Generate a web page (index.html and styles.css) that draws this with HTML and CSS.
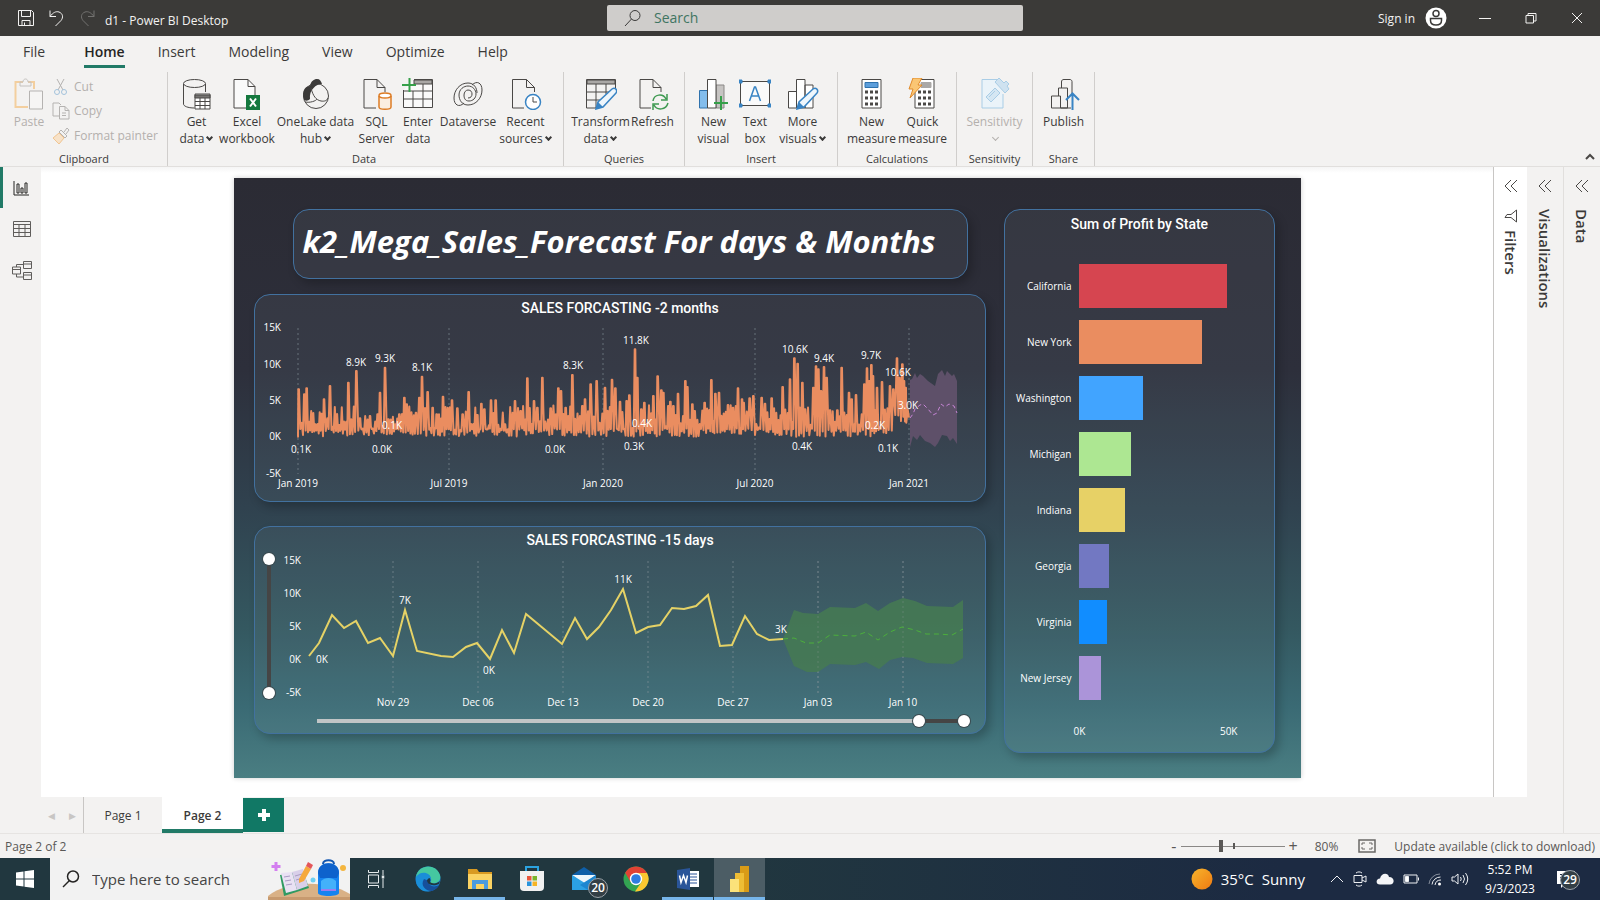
FILE: index.html
```html
<!DOCTYPE html>
<html lang="en">
<head>
<meta charset="utf-8">
<title>d1 - Power BI Desktop</title>
<link rel="stylesheet" href="styles.css">
</head>
<body>
<div class="app">
<header class="titlebar">
  <div class="quick">
    <button aria-label="Save"><svg width="18" height="18" viewBox="0 0 18 18"><path d="M1.5 1.500h13l2 2v13h-15zM4.500 1.500v6h9v-6M5 16.500v-5h8v5M7.500 16.500v-3"/></svg></button>
    <button aria-label="Undo"><svg width="18" height="18" viewBox="0 0 18 18"><path d="M2 1.500v6h6M2 7.500C5 3.500 8 2 11 3c4 1.500 4.500 5.500 2 8.500l-5.500 5.500"/></svg></button>
    <button aria-label="Redo" class="dim"><svg width="18" height="18" viewBox="0 0 18 18"><path d="M15 1.500v6H9M15 7.500C12 3.500 9 2 6 3 2 4.500 1.500 8.500 4 11.500L9.500 17"/></svg></button>
    <span class="doc">d1 - Power BI Desktop</span>
  </div>
  <label class="search"><svg width="18" height="18" viewBox="0 0 18 18"><circle cx="11" cy="6.500" r="5"/><path d="M7.500 10 1 17"/></svg><input type="text" placeholder="Search" aria-label="Search"></label>
  <div class="window-tools">
    <button class="signin">Sign in <svg width="22" height="22" viewBox="0 0 22 22"><circle cx="11" cy="11" r="10.500" fill="#fff" stroke="none"/><circle cx="11" cy="6.500" r="3" stroke="#3b3a38" stroke-width="1.500"/><path d="M5.500 11.500h11v2c0 3-2.500 4.500-5.500 4.500s-5.500-1.500-5.500-4.500z" stroke="#3b3a38" stroke-width="1.500"/></svg></button>
    <button class="win" aria-label="Minimize"><svg width="12" height="12" viewBox="0 0 12 12"><path d="M0 6.500h12"/></svg></button>
    <button class="win" aria-label="Restore"><svg width="12" height="12" viewBox="0 0 12 12"><path d="M1 3.500h7.500V11H1zM3 3.500v-2h8v7.500H8.500"/></svg></button>
    <button class="win" aria-label="Close"><svg width="12" height="12" viewBox="0 0 12 12"><path d="m1 1 10 10M11 1 1 11"/></svg></button>
  </div>
</header>

<nav class="tabs">
  <button class="file">File</button><button class="on">Home</button><button>Insert</button><button>Modeling</button><button>View</button><button>Optimize</button><button>Help</button>
</nav>

<section class="ribbon">
  <div class="group clipboard">
    <div class="clip">
      <button class="tool off" disabled><svg width="32" height="32" viewBox="0 0 32 32"><path d="M10 4H2.500v25H15M21 11V4h-6" stroke="#f3cf9f" stroke-width="2"/><path d="M7 8V4h3c0-4 5-4 5 0h3v4z" stroke="#c4c2c0"/><path d="M16.500 13h13v18h-13z" stroke="#b5b3b1" fill="#f6f5f4"/></svg><span>Paste</span></button>
      <div class="clip-list">
        <button disabled><svg width="18" height="18" viewBox="0 0 18 18"><path d="M5 1l6 11M12 1 6 12" stroke="#b5b3b1"/><circle cx="5" cy="14" r="2.500" stroke="#a4c3dc"/><circle cx="12" cy="14" r="2.500" stroke="#a4c3dc"/></svg>Cut</button>
        <button disabled><svg width="18" height="18" viewBox="0 0 18 18"><path d="M7 14H1V1h6l2 2M7.500 4.500H13l4 4V17H7.500zM13 4.500v4h4M10 11h4M10 13.500h4" stroke="#b5b3b1"/></svg>Copy</button>
        <button disabled><svg width="18" height="18" viewBox="0 0 18 18"><path d="m7 6 5 5-5 6-6-6z" fill="#f7e2c8" stroke="#f0c592"/><path d="m7 5 2-2 6 6-2 2zM12 5l3-4 2 2-3 4" stroke="#b5b3b1"/></svg>Format painter</button>
      </div>
    </div>
    <div class="caption">Clipboard</div>
  </div>

  <div class="group data">
    <div class="tools">
      <button class="tool"><svg width="32" height="32" viewBox="0 0 32 32"><path d="M2.500 6v20c0 2 4 4 11 4M24.500 14V6"/><ellipse cx="13.500" cy="5.500" rx="11" ry="4"/><path d="M14 16h15v15H14z" fill="#fff"/><path d="M14 17h15v3H14z" fill="#767472"/><path d="M14 23.500h15M14 27.500h15M19 20v11M24 20v11"/></svg><span>Get<br>data<i class="chev"></i></span></button>
      <button class="tool"><svg width="32" height="32" viewBox="0 0 32 32"><path d="M3 1.500h14l7 7V30H3z" fill="#fafafa"/><path d="M17 1.500v7h7"/><path d="M15 17h14v15H15z" fill="#15793f" stroke="none"/><path d="m19 20.500 6 8M25 20.500l-6 8" stroke="#fff" stroke-width="2"/></svg><span>Excel<br>workbook</span></button>
      <button class="tool"><svg width="32" height="32" viewBox="0 0 32 32"><circle cx="16" cy="18" r="12.500"/><path d="M4 22C1 12 6 8 10 8c1-5 4-7 7-7s4 2 5 5c-6 0-13 6-12 15-2 2-4 2-6 1z" fill="#3b3a39" stroke="none"/><path d="M11 10c2 8 5 12 10 13 3 .5 6 0 7-3M5 24c5 1 11-1 12-3"/></svg><span>OneLake data<br>hub<i class="chev"></i></span></button>
      <button class="tool"><svg width="32" height="32" viewBox="0 0 32 32"><path d="M15 30H3V1.500h13l8 8V14M16 1.500v8h8"/><path d="M18 18v11c0 3 12 3 12 0V18" fill="#fbeee1" stroke="#dd7c25" stroke-width="1.500"/><ellipse cx="24" cy="17.500" rx="6" ry="2.500" fill="#fff" stroke="#dd7c25" stroke-width="1.500"/></svg><span>SQL<br>Server</span></button>
      <button class="tool"><svg width="32" height="32" viewBox="0 0 32 32"><path d="M12 1.500h18.500v28h-29V12" fill="#fafafa"/><path d="M12 2h18v4H12z" fill="#aaa8a6"/><path d="M1.500 13h29M1.500 21h29M11 13v16M21 6v23"/><path d="M7.500 0v14M0 7h14" stroke="#36a04a" stroke-width="2"/></svg><span>Enter<br>data</span></button>
      <button class="tool"><svg width="32" height="32" viewBox="0 0 32 32"><path d="M20 7c5-5 10-2 10 5 0 8-6 15-14 15-6 0-9-5-9-10 0-6 5-9 9-9 5 0 8 4 8 8s-3 7-7 7-5-3-5-6 2-5 4-5"/><path d="M12 25C7 30 2 27 2 20 2 12 8 5 16 5c6 0 9 5 9 10M16 12c3 0 4 2 4 4s-1 4-4 4"/></svg><span>Dataverse</span></button>
      <button class="tool"><svg width="32" height="32" viewBox="0 0 32 32"><path d="M14 30H2.500V1.500h14l8 8V14M16.500 1.500v8h8"/><circle cx="23" cy="24" r="7.500" fill="#fff" stroke="#3984c4" stroke-width="1.500"/><path d="M23 19v5h4"/></svg><span>Recent<br>sources<i class="chev"></i></span></button>
    </div>
    <div class="caption">Data</div>
  </div>

  <div class="group queries">
    <div class="tools">
      <button class="tool"><svg width="32" height="32" viewBox="0 0 32 32"><path d="M1.500 1.500h29V13M13 30H1.500V1.500" fill="none"/><path d="M2 2h28v4H2z" fill="#aaa8a6"/><path d="M1.500 14h24M1.500 22h14M11 6v24M21 6v10"/><path d="m11 31 2-7 14-13c3-2 6 1 4 4L18 29z" fill="#eef6fc" stroke="#3984c4" stroke-width="1.500"/><path d="m11 31 2-7 5 5z" fill="#3984c4" stroke="none"/></svg><span>Transform<br>data<i class="chev"></i></span></button>
      <button class="tool"><svg width="32" height="32" viewBox="0 0 32 32"><path d="M14 30H3V1.500h13l8 8V14M16 1.500v8h8" fill="none"/><path d="M16 23c1-7 10-8 13-2M31 25c-2 7-11 8-14 2M30 16v6h-6M16 32v-6h6" stroke="#3f9a52" stroke-width="1.500"/></svg><span>Refresh</span></button>
    </div>
    <div class="caption">Queries</div>
  </div>

  <div class="group insert">
    <div class="tools">
      <button class="tool"><svg width="32" height="32" viewBox="0 0 32 32"><path d="M1.500 12.500h8V30h-8z" fill="#83bdec" stroke="#2f72ad"/><path d="M18 7h8v23h-8z" fill="#c6c4c2" stroke="#8a8886"/><path d="M9.500 1.500H18V30H9.500z" fill="#fff"/><path d="M23 18v14M16 25h14" stroke="#36a04a" stroke-width="2"/></svg><span>New<br>visual</span></button>
      <button class="tool"><svg width="32" height="32" viewBox="0 0 32 32"><path d="M1.500 3.500h29v24h-29z" fill="#fafafa"/><path d="M0 2h3v3H0zM29 2h3v3h-3zM0 26h3v3H0zM29 26h3v3h-3z" fill="#3984c4" stroke="#3984c4"/><path d="m10.500 23 5-14h1l5 14M12.500 18h7" stroke="#3984c4" stroke-width="1.500"/></svg><span>Text<br>box</span></button>
      <button class="tool"><svg width="32" height="32" viewBox="0 0 32 32"><path d="M1.500 13.500h8V30h-8zM9.500 1.500H18V30H9.500zM18 7h8v23h-8z" fill="#fff"/><path d="m10 31 2-7 14-13c3-2 6 1 4 4L17 29z" fill="#eef6fc" stroke="#3984c4" stroke-width="1.500"/><path d="m10 31 2-7 5 5z" fill="#3984c4" stroke="none"/></svg><span>More<br>visuals<i class="chev"></i></span></button>
    </div>
    <div class="caption">Insert</div>
  </div>

  <div class="group calc">
    <div class="tools">
      <button class="tool"><svg width="32" height="32" viewBox="0 0 32 32"><path d="M6 1.500h19V30H6z" fill="#fff"/><path d="M9 4.500h13v5H9z" fill="#5c9edb" stroke="#2f72ad"/><path d="M9 14h13M9 20h13M9 26h13" stroke-width="3" stroke-dasharray="3 2"/></svg><span>New<br>measure</span></button>
      <button class="tool"><svg width="32" height="32" viewBox="0 0 32 32"><path d="M8 1.500h19V30H8z" fill="#fff"/><path d="M14 4.500h10v5H14z" fill="#aaa8a6" stroke="#aaa8a6"/><path d="M11 14h13M11 20h13M11 26h13" stroke-width="3" stroke-dasharray="3 2"/><path d="M6 0h9l-4 7h4L3 20l3-9H2z" fill="#fac674" stroke="#e08a2a"/></svg><span>Quick<br>measure</span></button>
    </div>
    <div class="caption">Calculations</div>
  </div>

  <div class="group sens">
    <div class="tools">
      <button class="tool off" disabled><svg width="32" height="32" viewBox="0 0 32 32"><g stroke="#a9cde6"><path d="M19 1.500H4V30h21V16" fill="#eaf3f9"/><path d="m8 19 9-9 5 5-9 9zM11 19l6-6" fill="#d5e7f3"/><path d="m17 4 4-4 5 5 2-2 3 3-2 2 2 3-4 4z" fill="#cfe2f0"/></g></svg><span>Sensitivity<br><i class="chev"></i></span></button>
    </div>
    <div class="caption">Sensitivity</div>
  </div>

  <div class="group share">
    <div class="tools">
      <button class="tool"><svg width="32" height="32" viewBox="0 0 32 32"><path d="M3.500 18h9v12h-9zM12.500 30h7v-20h-9v8M13.500 10V4c0-2 1-2.500 2.500-2.500h6c1 0 2 1 2 2V16M12.500 30H23" fill="none"/><path d="M24.500 32V16M18 22l6.500-6.500L31 22" stroke="#3984c4" stroke-width="2"/></svg><span>Publish</span></button>
    </div>
    <div class="caption">Share</div>
  </div>
  <button class="collapse" aria-label="Collapse ribbon"><svg width="10" height="8" viewBox="0 0 10 8"><path d="m1 6 4-4 4 4" stroke-width="2"/></svg></button>
</section>

<div class="workspace">
  <div class="editor">
    <div class="upper">
      <aside class="rail">
        <button class="on" aria-label="Report view"><svg width="20" height="20" viewBox="0 0 20 20"><path d="M2 3v14h15M5 6h2v9H5zM9 10h2v5H9zM13 5h2v10h-2z" stroke="#252423"/></svg></button>
        <button aria-label="Table view"><svg width="20" height="20" viewBox="0 0 20 20"><path d="M1.500 2.500h17v15h-17zM1.500 5.500h17M1.500 9.500h17M1.500 13.500h17M7 5v12M13 5v12"/></svg></button>
        <button aria-label="Model view"><svg width="20" height="20" viewBox="0 0 20 20"><path d="M.5 7h8v7h-8zM.5 9.500h8M11.500 1.500h8v7h-8zM11.500 4h8M11.500 12.500h8v7h-8zM11.500 15h8M4.500 7V4.500h7M4.500 14v3h7"/></svg></button>
      </aside>
      <main class="stage">
        <div class="canvas">
          <div class="left">
            <h1 class="card headline">k2_Mega_Sales_Forecast For days &amp; Months</h1>
            <section class="card">
              <svg class="chart" viewBox="1 1 730 206" role="img" aria-label="Sales forecast, 2 months">
                <text class="t" x="366" y="19">SALES FORCASTING -2 months</text>
                <path class="grid" d="M44 34v146M195 34v146M349 34v146M501 34v146M655 34v146"/>
                <g class="end"><text x="27" y="37">15K</text><text x="27" y="74">10K</text><text x="27" y="110">5K</text><text x="27" y="146">0K</text><text x="27" y="183">-5K</text></g>
                <path class="band" fill="#5e5069" d="M656 86 658 85 661 79 663 84 666 80 669 82 674 87 681 92 684 80 688 76 691 82 693 77 698 82 700 80 703 87V150L699 144 696 147 693 142 688 141 684 149 681 153 676 149 671 147 666 141 663 146 659 142 656 153z"/>
                <path class="pink" d="M656 124 659 120 661 115 666 111 669 110 674 115 679 121 683 119 687 110 691 113 695 110 700 112 703 119"/>
                <path id="daily" class="daily" d=""/>
                <g><text x="44" y="193">Jan 2019</text><text x="195" y="193">Jul 2019</text><text x="349" y="193">Jan 2020</text><text x="501" y="193">Jul 2020</text><text x="655" y="193">Jan 2021</text>
                <text x="47" y="159">0.1K</text><text x="102" y="72">8.9K</text><text x="131" y="68">9.3K</text><text x="138" y="135">0.1K</text><text x="128" y="159">0.0K</text><text x="168" y="77">8.1K</text><text x="319" y="75">8.3K</text><text x="301" y="159">0.0K</text><text x="382" y="50">11.8K</text><text x="388" y="133">0.4K</text><text x="380" y="156">0.3K</text><text x="541" y="59">10.6K</text><text x="570" y="68">9.4K</text><text x="548" y="156">0.4K</text><text x="617" y="65">9.7K</text><text x="644" y="82">10.6K</text><text x="654" y="115">3.0K</text><text x="621" y="135">0.2K</text><text x="634" y="158">0.1K</text></g>
              </svg>
            </section>
            <section class="card days">
              <svg class="chart" viewBox="1 1 730 206" role="img" aria-label="Sales forecast, 15 days">
                <text class="t" x="366" y="19">SALES FORCASTING -15 days</text>
                <path class="grid" d="M139 35v133M224 35v133M309 35v133M394 35v133M479 35v133M564 35v133M649 35v133"/>
                <g class="end"><text x="47" y="38">15K</text><text x="47" y="71">10K</text><text x="47" y="104">5K</text><text x="47" y="137">0K</text><text x="47" y="170">-5K</text></g>
                <path class="band" fill="#467a53" fill-opacity=".88" d="M529 113 540 84 549 87 564 88 576 81 601 82 612 77 624 85 636 77 649 72 661 75 673 80 699 81 709 74V132L699 138 673 137 659 132 648 131 636 134 625 143 612 136 601 139 576 138 564 146 553 146 540 140z"/>
                <path class="grid faint" d="M564 35v133M649 35v133"/>
                <path class="green" d="M529 113 540 112 552 117 564 117 576 109 601 110 612 106 624 114 636 106 648 101 661 104 672 108 684 108 698 109 709 103"/>
                <path class="gold" d="M55 130 65 117 78 89 90 102 102 95 114 117 126 112 139 130 151 84 163 125 187 130 199 131 212 121 223 117 236 133 248 104 260 127 272 88 308 118 321 92 333 113 345 101 357 84 369 63 382 107 394 101 406 99 418 82 430 83 442 80 454 69 466 120 478 119 491 90 503 108 515 114 529 113"/>
                <g><text x="139" y="180">Nov 29</text><text x="224" y="180">Dec 06</text><text x="309" y="180">Dec 13</text><text x="394" y="180">Dec 20</text><text x="479" y="180">Dec 27</text><text x="564" y="180">Jan 03</text><text x="649" y="180">Jan 10</text>
                <text x="68" y="137">0K</text><text x="151" y="78">7K</text><text x="235" y="148">0K</text><text x="369" y="57">11K</text><text x="527" y="107">3K</text></g>
              </svg>
              <div class="zoom-y"><input type="range" value="100" aria-label="Value axis top"><input type="range" value="0" aria-label="Value axis bottom"></div>
              <div class="zoom-x"><input type="range" value="93" aria-label="Date axis start"><input type="range" value="100" aria-label="Date axis end"></div>
            </section>
          </div>
          <section class="card profit">
            <h2>Sum of Profit by State</h2>
            <div class="bars">
              <span>California</span><div><b class="red" style="width:98.7%"></b></div>
              <span>New York</span><div><b class="orange" style="width:82%"></b></div>
              <span>Washington</span><div><b class="sky" style="width:43%"></b></div>
              <span>Michigan</span><div><b class="lime" style="width:35.3%"></b></div>
              <span>Indiana</span><div><b class="yellow" style="width:31.3%"></b></div>
              <span>Georgia</span><div><b class="indigo" style="width:20%"></b></div>
              <span>Virginia</span><div><b class="blue" style="width:19.3%"></b></div>
              <span>New Jersey</span><div><b class="lilac" style="width:14.7%"></b></div>
            </div>
            <div class="scale"><span>0K</span><span>50K</span></div>
          </section>
        </div>
      </main>
      <aside class="pane filters"><button aria-label="Expand filters"><svg width="14" height="14" viewBox="0 0 14 14"><path d="M7 1 1 7l6 6M13 1 7 7l6 6"/></svg></button><svg width="14" height="14" viewBox="0 0 14 14"><path d="M1 1.500h12L8.500 7v6l-3-2V7z" transform="rotate(90 7 7)"/></svg><h3>Filters</h3></aside>
    </div>
    <div class="pages">
      <button class="arrow" aria-label="Previous page">◀</button><button class="arrow" aria-label="Next page">▶</button>
      <button class="page first">Page 1</button><button class="page on">Page 2</button><button class="add" aria-label="New page"><svg width="12" height="12" viewBox="0 0 12 12"><path d="M6 0v12M0 6h12" stroke="#fff" stroke-width="4"/></svg></button>
    </div>
  </div>
  <aside class="pane vis"><button aria-label="Expand visualizations"><svg width="14" height="14" viewBox="0 0 14 14"><path d="M7 1 1 7l6 6M13 1 7 7l6 6"/></svg></button><h3>Visualizations</h3></aside>
  <aside class="pane fields"><button aria-label="Expand data"><svg width="14" height="14" viewBox="0 0 14 14"><path d="M7 1 1 7l6 6M13 1 7 7l6 6"/></svg></button><h3>Data</h3></aside>
</div>

<footer class="status">
  <span class="grow">Page 2 of 2</span>
  <div class="zoom"><button aria-label="Zoom out">-</button><input type="range" min="10" max="190" value="80" aria-label="Zoom"><button aria-label="Zoom in">+</button></div>
  <span class="pct">80%</span>
  <button class="fit" aria-label="Fit to page"><svg width="18" height="14" viewBox="0 0 18 14"><path d="M1 1h16v12H1z" stroke-width="1.500"/><path d="M4 6V4h3M11 4h3v2M14 8v2h-3M7 10H4V8"/></svg></button>
  <a href="#update">Update available (click to download)</a>
</footer>

<div class="taskbar">
  <button class="start" aria-label="Start"><svg width="18" height="18" viewBox="0 0 18 18"><path d="M0 2.500 7.500 1.500V8.500H0zM8.500 1.300 18 0v8.500H8.500zM0 9.500h7.500v7L0 15.500zM8.500 9.500H18V18l-9.500-1.300z" fill="#fff" stroke="none"/></svg></button>
  <label class="find"><svg width="18" height="18" viewBox="0 0 18 18"><circle cx="11" cy="6.500" r="5.500" stroke-width="1.500"/><path d="M7.500 10.500 1 17" stroke-width="1.500"/></svg><input type="text" placeholder="Type here to search" aria-label="Type here to search">
    <svg class="art" width="82" height="42" viewBox="0 0 82 42"><g stroke="none"><path d="M0 38c20-16 60-16 82-2v6H0z" fill="#d9b186"/><path d="M0 39h82v3H0z" fill="#c79a6f"/><path d="m12 17 23-4 6 17-25 8z" fill="#2f9a62"/><path d="m13 15 11-1 5 18-11 3z" fill="#e9e1f3"/><path d="m24 14 11-3 5 17-11 4z" fill="#d9cfe9"/><path d="m16 19 6-1M17 23l6-1M18 27l6-1M27 18l7-2M28 22l7-2" stroke="#a99bc4"/><path d="m31 21 7-13 5 3-7 12-5 2z" fill="#f6a83c"/><path d="m38 8 2-4 5 3-2 4z" fill="#e4565a"/><path d="M8 4v9M3.500 8.500h9" stroke="#d37ff0" stroke-width="3"/><circle cx="75" cy="10" r="3" fill="#f4b63f"/><circle cx="45" cy="22" r="2.500" fill="#6ed0f2"/><path d="M55 6c0-5 11-5 11 0" fill="none" stroke="#1156b0" stroke-width="2"/><path d="M50 15c0-13 21-13 21 0v20c0 4-21 4-21 0z" fill="#1583f0"/><path d="M50 15c0-13 21-13 21 0l-2 5H52z" fill="#0e62cc"/><path d="M53 23c4-4 11-4 15 0v9H53z" fill="#43b1fa"/><path d="M53 32h15" stroke="#9b7cf0" stroke-width="2"/></g></svg></label>
  <div class="apps">
    <button aria-label="Task View"><svg width="20" height="18" viewBox="0 0 20 18"><g stroke="#e5eaec"><path d="M2.500 5h10v8h-10zM2.500 0v2.500h10V0M2.500 18v-2.500h10V18M17 0v5M17 9v9"/><path d="M17 5.500v3" stroke-width="2.500"/></g></svg></button>
    <button aria-label="Edge"><svg width="26" height="26" viewBox="0 0 26 26"><g stroke="none"><circle cx="13" cy="13" r="12.500" fill="#1c7fd0"/><path d="M1 11C3-2 21-3 25 9c2 7-6 10-10 8 3-4 0-8-5-8-4 0-7 1-9 2z" fill="#45c8a0"/><path d="M1 11c4-7 15-5 15 2 0 1-1 3-1 4-3-3-7 0-5 5 1 2 3 3 5 3C6 27 0 20 1 11z" fill="#1a8ed8"/><path d="M9 13c-4 6 1 12 8 12 3-1 6-3 7-6-5 3-11 1-10-4z" fill="#16509b"/><path d="M12 14c0 4 5 7 12 4l1-3c-3 3-8 3-10 1 1-2 0-4-1-4z" fill="#21373f"/></g></svg></button>
    <button class="open" aria-label="File Explorer"><svg width="26" height="22" viewBox="0 0 26 22"><g stroke="none"><path d="M1 1h9l2 3h13v17H1z" fill="#d99a22"/><path d="M1 6h24v15H1z" fill="#fbd363"/><path d="M5 21v-9h16v9h-4v-5h-8v5z" fill="#4b9be0"/></g></svg></button>
    <button aria-label="Store"><svg width="26" height="26" viewBox="0 0 26 26"><g stroke="none"><path d="M7 6V1h12v5" fill="none" stroke="#2ba3e0" stroke-width="2"/><path d="M1 5h24v16q0 4-4 4H5q-4 0-4-4z" fill="#f1f1f1"/><path d="M8 10h4.500v4.500H8z" fill="#e9573d"/><path d="M13.500 10H18v4.500h-4.500z" fill="#79b52d"/><path d="M8 15.500h4.500V20H8z" fill="#2a94dc"/><path d="M13.500 15.500H18V20h-4.500z" fill="#f6b424"/></g></svg></button>
    <button class="mail" aria-label="Mail"><svg width="26" height="24" viewBox="0 0 26 24"><g stroke="none"><path d="M1 8 13 0l12 8v15H1z" fill="#0f5fa8"/><path d="M1 8h24l-12 9z" fill="#eef6fb"/><path d="M1 8l24 15H1z" fill="#2ba1e4"/><path d="M25 8 9 18l8 5h8z" fill="#1c86d0"/></g></svg><em>20</em></button>
    <button aria-label="Chrome"><svg width="26" height="26" viewBox="0 0 26 26"><g stroke="none"><circle cx="13" cy="13" r="12.500" fill="#33a452"/><path d="M2.200 6.700A12.500 12.500 0 0 1 24 7H13l-5.500 9z" fill="#e14234"/><path d="M24 7A12.500 12.500 0 0 1 12 25.500L18.500 16 18 9l-5-2z" fill="#fbc730"/><circle cx="13" cy="13" r="6.200" fill="#fff"/><circle cx="13" cy="13" r="4.800" fill="#2f7de1"/></g></svg></button>
    <button class="open" aria-label="Word"><svg width="24" height="24" viewBox="0 0 24 24"><g stroke="none"><path d="M12 4h11v16H12z" fill="#fff"/><path d="M14 7h7M14 10h7M14 13h7M14 16h7" stroke="#2a5599" stroke-width="1"/><path d="M1 3 14 1v22L1 21z" fill="#2a5599"/></g><path d="m3.500 8.500 1.500 7 2.500-7 2.500 7 1.500-7" stroke="#fff" stroke-width="1.500"/></svg></button>
    <button class="open active" aria-label="Power BI Desktop"><svg width="20" height="26" viewBox="0 0 20 26"><g stroke="none"><path d="M10 0h9v26h-9z" fill="#d99b17"/><path d="M5 7h9v19H5z" fill="#eebd35"/><path d="M0 13h9v13H0z" fill="#fbe27a"/></g></svg></button>
  </div>
  <button class="weather"><svg width="22" height="22" viewBox="0 0 22 22"><defs><linearGradient id="sun" x1="0" y1="0" x2="1" y2="1"><stop stop-color="#f8b52c"/><stop offset="1" stop-color="#ee7a12"/></linearGradient></defs><circle cx="11" cy="11" r="10.500" fill="url(#sun)" stroke="none"/></svg><span>35°C</span><span>Sunny</span></button>
  <div class="tray">
    <button aria-label="Hidden icons"><svg width="14" height="8" viewBox="0 0 14 8"><path d="m1 7 6-6 6 6"/></svg></button>
    <button aria-label="Meet now"><svg width="14" height="16" viewBox="0 0 14 16"><path d="M1 4.500h8v7H1zM9 7l4-2v6l-4-2M3 2c2-1.500 4-1.500 6 0M3 14c2 1.500 4 1.500 6 0"/></svg></button>
    <button aria-label="OneDrive"><svg width="18" height="12" viewBox="0 0 18 12"><path d="M4 11.500c-5 0-4-6 0-6C5 0 12-1 13 4c6 0 6 7.500 1 7.500z" fill="#f4f5f7" stroke="none"/></svg></button>
    <button aria-label="Battery"><svg width="16" height="12" viewBox="0 0 16 12"><path d="M1 2h13v8H1zM15.500 4.500v3"/><path d="M2.500 3.500h3v5h-3z" fill="#fff"/></svg></button>
    <button aria-label="Network"><svg width="14" height="14" viewBox="0 0 14 14"><path d="M1 12A11 11 0 0 1 12 2" opacity=".5"/><path d="M4 12.500A8.500 8.500 0 0 1 12.500 5M7 13a6 6 0 0 1 6-5"/><circle cx="11.500" cy="12" r="1.500" fill="#fff" stroke="none"/></svg></button>
    <button aria-label="Volume"><svg width="18" height="14" viewBox="0 0 18 14"><path d="M1 5h2.500L7 2v10L3.500 9H1zM9.500 5q1.500 2 0 4M12 3q3 4 0 8M14.500 1q4.500 6 0 12"/></svg></button>
  </div>
  <button class="clock">5:52 PM<br>9/3/2023</button>
  <button class="notes" aria-label="Notifications"><svg width="18" height="18" viewBox="0 0 18 18"><path d="M0 1h18v13H8l-4 4v-4H0z" fill="#fff" stroke="none"/><path d="M3 4.500h12M3 7.500h12M3 10.500h7" stroke="#1c2a42"/></svg><em>29</em></button>
</div>
</div>
<script src="charts.js"></script>
</body>
</html>
```
FILE: styles.css
```css
* { box-sizing: border-box; }
body { margin: 0; font-family: "Open Sans", "Noto Sans", sans-serif; font-size: 12px; color: #3b3a39; }
button { font: inherit; color: inherit; background: none; border: 0; padding: 0; margin: 0; }
input { font: inherit; margin: 0; }
h1, h2, h3 { margin: 0; }
svg { display: block; fill: none; stroke: #4a4846; flex: none; }

.app { display: flex; flex-direction: column; min-height: 100vh; background: #f3f2f1; }

.titlebar { display: grid; grid-template-columns: 38% 26% 1fr; height: 36px; background: #3b3a38; color: #f3f2f1; align-items: center; }
.titlebar svg { stroke: #f3f2f1; }
.quick { display: flex; align-items: center; gap: 13px; padding-left: 17px; }
.quick .dim { opacity: .3; }
.quick .doc { margin-left: -5px; padding-top: 4px; }
.search { display: flex; align-items: center; gap: 12px; height: 26px; margin: 0 1px 1px -1px; padding-left: 17px; background: #cfcdcb; border-radius: 2px; }
.titlebar .search svg { stroke: #3b3a39; }
.search input { border: 0; background: none; padding: 0; flex: 1; min-width: 0; font-size: 14px; }
.search input::placeholder { color: #3f7562; opacity: 1; }
.window-tools { display: flex; justify-content: flex-end; align-items: center; }
.signin { display: flex; align-items: center; gap: 10px; margin-right: 15px; }
.win { width: 46px; display: flex; justify-content: center; }

.tabs { display: flex; height: 36px; padding-left: 23px; gap: 33px; font-size: 14px; align-items: flex-start; }
.tabs button { height: 32px; padding-top: 2px; border-bottom: 3px solid transparent; }
.tabs .file { margin-right: 6px; }
.tabs .on { font-weight: 600; border-color: #217a67; color: #252423; }

.ribbon { display: flex; height: 95px; border-bottom: 1px solid #e1dfdd; position: relative; }
.group { display: flex; flex-direction: column; justify-content: space-between; height: 94px; padding: 6px 9px 0; border-right: 1px solid #d0cecc; }
.caption { text-align: center; font-size: 11px; line-height: 14px; }
.tools { display: grid; justify-content: center; }
.tool { display: flex; flex-direction: column; align-items: center; line-height: 17px; white-space: nowrap; }
.tool span { margin-top: 3px; }
.off { color: #b3b0ad; }
.chev { display: inline-block; width: 5px; height: 5px; border: solid; border-width: 0 2px 2px 0; transform: rotate(45deg); margin: 0 1px 3px 3px; }
.off .chev { border-width: 0 1px 1px 0; }
.clipboard { width: 168px; padding: 6px 12px 0 13px; }
.clip { display: flex; gap: 7px; }
.clip .tool { width: 34px; }
.clip-list { display: flex; flex-direction: column; }
.clip-list button { display: flex; align-items: center; gap: 4px; height: 25px; color: #b3b0ad; white-space: nowrap; }
.clip-list button:first-child { height: 18px; align-items: flex-start; margin-bottom: 2px; }
.data .tools { grid-template-columns: 45px 56px 81px 41px 42px 58px 57px; }
.data { width: 396px; padding: 6px 9px 0 6px; }
.queries { width: 121px; }
.queries .tools { grid-template-columns: 57px 47px; }
.insert { width: 153px; }
.insert .tools { grid-template-columns: 42px 41px 54px; }
.calc { width: 119px; }
.calc .tools { grid-template-columns: 51px 51px; }
.sens { width: 76px; }
.share { width: 62px; }
.collapse { position: absolute; right: 5px; bottom: 5px; }

.workspace { display: flex; flex: 1; border-bottom: 1px solid #e6e4e2; }
.editor { flex: 1; display: flex; flex-direction: column; min-width: 0; }
.upper { display: flex; flex: 1; min-height: 0; }
.rail { width: 41px; display: flex; flex-direction: column; }
.rail button { height: 41px; display: flex; align-items: center; justify-content: center; border-left: 3px solid transparent; }
.rail .on { border-color: #217a67; }
.rail svg { stroke: #5f5d5b; }
.stage { flex: 1; min-width: 0; display: flex; justify-content: center; align-items: flex-start; padding: 11px 0 18px; background: linear-gradient(#f5f5f5, #fff 6px); }
.canvas { width: 75%; max-width: 1067px; aspect-ratio: 1067 / 600; display: grid; grid-template-columns: 732fr 271fr; gap: 18px; padding: 31px 26px 25px 20px; background: linear-gradient(#2b2b34, #2d2f3b 32%, #30424f 55%, #345860 75%, #3a6a74 88%, #4a7e82); box-shadow: 0 0 5px #0003; }
.left { display: flex; flex-direction: column; }
.card { border: 1px solid #42719f; border-radius: 16px; background: rgba(150, 175, 190, .09); box-shadow: 4px 5px 10px rgba(0, 0, 0, .22); color: #fff; position: relative; }
.headline { margin: 0 18px 15px 39px; height: 70px; padding: 9px 9px 0; font-size: 31px; line-height: 44px; font-style: italic; font-weight: 700; white-space: nowrap; }
.left .days { margin-top: 24px; }
.chart { width: 100%; height: auto; }
.chart text { fill: #fff; stroke: none; font-size: 10px; text-anchor: middle; }
.chart .end text { text-anchor: end; }
.chart .t { font-family: Roboto, sans-serif; font-size: 14px; font-weight: 500; }
.band { stroke: none; }
.grid { stroke: #8b969d; stroke-opacity: .6; stroke-width: 1; stroke-dasharray: 2 3; }
.faint { stroke-opacity: .3; }
.daily { stroke: #ea8d60; stroke-width: 2; stroke-linejoin: round; }
.gold { stroke: #e5d266; stroke-width: 2; }
.pink { stroke: #c584d4; stroke-width: 1; stroke-dasharray: 4 3; }
.green { stroke: #4caf3c; stroke-width: 1; stroke-dasharray: 5 4; }

.zoom-x, .zoom-y { position: absolute; display: grid; align-items: center; justify-items: center; }
.zoom-x { left: 8.5%; right: 2%; bottom: 5px; height: 14px; background: linear-gradient(90deg, #c0c5c6 93%, #454545 93%) center / 100% 4px no-repeat; }
.zoom-y { left: 7px; top: 12.5%; bottom: 16.5%; width: 14px; background: linear-gradient(#454545, #454545) center / 4px 100% no-repeat; }
.zoom-x input, .zoom-y input { grid-area: 1 / 1; appearance: none; background: none; pointer-events: none; }
.zoom-x input { width: 100%; height: 14px; }
.zoom-y input { height: 100%; width: 14px; writing-mode: vertical-lr; direction: rtl; }
.zoom-x input::-webkit-slider-thumb, .zoom-y input::-webkit-slider-thumb { appearance: none; width: 12px; height: 12px; border-radius: 50%; background: #fff; box-shadow: 0 0 0 1px #3a4a4f; pointer-events: auto; }

.profit { padding: 4px 45px 0 5px; display: flex; flex-direction: column; }
.profit h2 { font: 500 14px/20px Roboto, sans-serif; text-align: center; margin-right: -41px; }
.bars { display: grid; grid-template-columns: 62px 1fr; gap: 12px 7px; padding-top: 30px; font-size: 10px; align-items: center; text-align: right; white-space: nowrap; }
.bars b { display: block; height: 44px; }
.red { background: #d64550; }
.orange { background: #ea8d60; }
.sky { background: #41a4ff; }
.lime { background: #ade792; }
.yellow { background: #e7d166; }
.indigo { background: #7278c2; }
.blue { background: #118dff; }
.lilac { background: #ab94d9; }
.scale { display: flex; justify-content: space-between; margin: 24px -9px 0 64px; font-size: 10px; }

.pane { display: flex; flex-direction: column; align-items: center; padding-top: 12px; }
.pane button { height: 14px; }
.pane h3 { writing-mode: vertical-rl; font-size: 15px; line-height: 20px; font-weight: 600; margin-top: 16px; }
.filters { width: 34px; background: #fff; border-left: 1px solid #c8c6c4; }
.filters > svg { margin-top: 16px; }
.filters h3 { margin-top: 7px; }
.vis { width: 37px; border-right: 1px solid #e1dfdd; }
.fields { width: 36px; }

.pages { display: flex; height: 36px; padding-left: 41px; }
.arrow { width: 21px; font-size: 9px; color: #c8c6c4; }
.page { width: 79px; }
.first { border-left: 1px solid #c8c6c4; }
.pages .page.on { width: 81px; background: #fff; font-weight: 600; border-bottom: 4px solid #217a67; padding-top: 4px; }
.add { width: 41px; height: 34px; margin-top: 1px; background: #117865; display: flex; align-items: center; justify-content: center; }

.status { display: flex; align-items: center; height: 24px; padding: 0 5px; color: #5a5856; }
.grow { flex: 1; }
.zoom { display: flex; align-items: center; gap: 4px; font-size: 16px; line-height: 20px; }
.zoom input { appearance: none; width: 104px; height: 14px; background: linear-gradient(#5a5856, #5a5856) 52px center / 2px 6px no-repeat, linear-gradient(#8a8886, #8a8886) center / 100% 1px no-repeat; }
.zoom input::-webkit-slider-thumb { appearance: none; width: 4px; height: 12px; background: #5a5856; }
.pct { margin: 0 20px 0 17px; }
.fit { margin-right: 18px; }
.fit svg { stroke: #6a6866; }
.status a { color: inherit; text-decoration: none; }

.taskbar { display: flex; align-items: center; height: 42px; background: linear-gradient(90deg, #21373f 45%, #1c2a42 80%); color: #fff; }
.start { width: 50px; display: flex; justify-content: center; }
.find { position: relative; width: 300px; height: 42px; display: flex; align-items: center; gap: 12px; padding-left: 12px; background: #f2f2f2; }
.find svg { stroke: #252423; }
.find input { flex: 1; min-width: 0; border: 0; padding: 0; background: none; font-size: 15px; }
.find input::placeholder { color: #454545; opacity: 1; }
.apps { display: flex; gap: 1px; flex: 1; }
.apps button { position: relative; width: 51px; height: 42px; display: flex; align-items: center; justify-content: center; }
.apps .open { box-shadow: inset 0 -3px #76b5ea; }
.apps .active { background: #4c5d65; }
em { position: absolute; right: -5px; bottom: -2px; width: 20px; height: 20px; border: 1px solid #9aa2a8; border-radius: 50%; background: #333f46; font: 600 12px/18px "Open Sans", sans-serif; text-align: center; color: #fff; }
.mail em { right: 1px; bottom: 2px; }
.weather { display: flex; align-items: center; gap: 8px; font-size: 15px; margin-right: 25px; }
.tray { display: flex; align-items: center; gap: 9px; margin-right: 16px; }
.tray svg { stroke: #eef0f3; }
.clock { width: 50px; line-height: 19px; margin-right: 22px; white-space: nowrap; }
.notes { position: relative; margin-right: 25px; }
```
FILE: charts.js
```javascript
// Daily sales peaks as [x, y], in thirds of a chart unit; the second list starts 1080 further right.
const first = [[176,325],[193,340],[200,322],[226,430],[245,398],[252,355],[270,315],[298,432],[325,305],[349,270],[360,412],[390,405],[413,400],[420,335],[435,260],[445,415],[478,400],[493,350],[500,370],[528,395],[538,350],[546,287],[563,333],[578,380],[590,400],[609,347],[636,358],[652,382],[668,400],[686,333],[712,402],[724,368],[733,385],[753,358],[767,358],[795,430],[825,360],[842,390],[862,292],[882,360],[892,380],[907,290],[932,382],[955,322],[963,330],[977,380],[997,282],[1027,375],[1035,355],[1052,310],[1070,300]];
const second = [[15,320],[36,296],[46,322],[60,362],[80,360],[88,343],[105,205],[112,290],[124,385],[133,365],[160,345],[173,286],[184,328],[190,335],[205,375],[211,362],[220,375],[234,338],[256,300],[262,318],[277,370],[284,390],[314,365],[334,297],[346,338],[357,335],[384,372],[399,380],[414,322],[426,355],[431,365],[449,352],[460,345],[485,350],[495,368],[515,352],[548,318],[570,295],[583,232],[593,248],[600,380],[607,305],[615,385],[640,320],[648,256],[655,265],[663,330],[672,258],[680,290],[690,388],[712,388],[725,260],[747,335],[755,355],[768,342],[793,310],[801,262],[808,300],[814,252],[819,285],[831,320],[846,303],[870,315],[880,325],[891,232],[898,290],[907,250],[912,300],[917,320]];
const peaks = first.concat(second.map(([x, y]) => [x + 1080, y]));

let seed = 7;
const rnd = () => (seed = (seed * 16807) % 2147483647) / 2147483647;
const pts = [[172, 467]];
let prev = 172;
for (const [x, y] of peaks) {
  const floor = x > 1960 ? 425 : 467;
  const n = Math.max(2, 2 * Math.round((x - prev) / 7));
  pts.push([prev + (x - prev) / n / 2, (pts[pts.length - 1][1] + floor) / 2]);
  for (let k = 1; k < n; k++) {
    const rise = k % 2 ? rnd() * 25 : 20 + rnd() * 75;
    pts.push([prev + (x - prev) * k / n, floor - rise]);
  }
  pts.push([x - 1, y], [x + 1, y]);
  prev = x + 1;
}
pts.push([1999, 425], [2003, 385], [2007, 410]);
document.getElementById("daily").setAttribute("d", "M" + pts.map(([x, y]) => (x / 3 - 14).toFixed(1) + " " + (y / 3 - 13).toFixed(1)).join("L"));
```
